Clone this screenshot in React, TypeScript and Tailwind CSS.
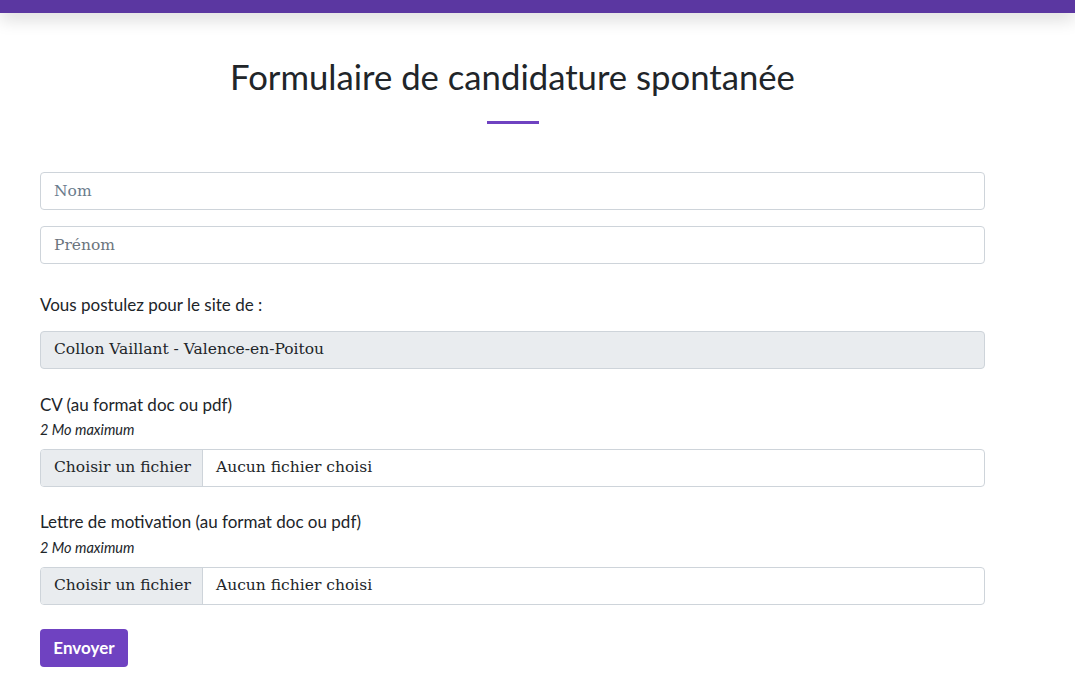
import React from "react";

const sans = { fontFamily: "Lato, 'Noto Sans', sans-serif" };
const serif = { fontFamily: "'DejaVu Serif', 'Liberation Serif', serif" };

function FileInput() {
  return (
    <div className="flex h-[38px] w-full overflow-hidden rounded-[4px] border border-[#ced4da] bg-white text-[15.5px] text-[#212529]" style={serif}>
      <div className="flex w-[162px] shrink-0 items-center border-r border-[#ced4da] bg-[#e9ecef] pl-[13px]">Choisir un fichier</div>
      <div className="flex items-center pl-[13px]">Aucun fichier choisi</div>
    </div>
  );
}

export default function App() {
  return (
    <div className="min-h-[681px] w-[1075px] bg-white" style={sans}>
      <div className="h-[13px] w-full bg-[#5b37a1] shadow-[0_5px_18px_rgba(0,0,0,0.18)]" />
      <div className="ml-[40px] flex w-[945px] flex-col">
        <h1 className="mt-[40px] text-center text-[34.7px] leading-[48px] font-normal text-[#212529]">Formulaire de candidature spontanée</h1>
        <div className="mx-auto mt-[20px] h-[3px] w-[52px] bg-[#6f42c1]" />
        <input
          className="mt-[48px] h-[38px] w-full rounded-[4px] border border-[#ced4da] px-[13px] text-[15.5px] outline-none placeholder:text-[#6a7b8c]"
          style={serif}
          placeholder="Nom"
        />
        <input
          className="mt-[16px] h-[38px] w-full rounded-[4px] border border-[#ced4da] px-[13px] text-[15.5px] outline-none placeholder:text-[#6c757d]"
          style={serif}
          placeholder="Prénom"
        />
        <div className="mt-[29px] h-[24px] text-[17px] leading-[24px] text-[#212529]">Vous postulez pour le site de :</div>
        <div
          className="mt-[14px] flex h-[38px] w-full items-center rounded-[4px] border border-[#ced4da] bg-[#e9ecef] px-[13px] text-[15.5px] text-[#212529]"
          style={serif}
        >
          Collon Vaillant - Valence-en-Poitou
        </div>
        <div className="mt-[24px] h-[24px] text-[17px] leading-[24px] text-[#212529]">CV (au format doc ou pdf)</div>
        <div className="mt-[4px] h-[18px] text-[14.5px] leading-[18px] italic text-[#212529]">2 Mo maximum</div>
        <div className="mt-[10px]">
          <FileInput />
        </div>
        <div className="mt-[23px] h-[24px] text-[17px] leading-[24px] text-[#212529]">Lettre de motivation (au format doc ou pdf)</div>
        <div className="mt-[5px] h-[18px] text-[14.5px] leading-[18px] italic text-[#212529]">2 Mo maximum</div>
        <div className="mt-[10px]">
          <FileInput />
        </div>
        <div className="mt-[24px]">
          <button className="h-[38px] w-[88px] rounded-[4px] bg-[#6f42c1] text-[17px] font-bold text-white">Envoyer</button>
        </div>
      </div>
    </div>
  );
}
